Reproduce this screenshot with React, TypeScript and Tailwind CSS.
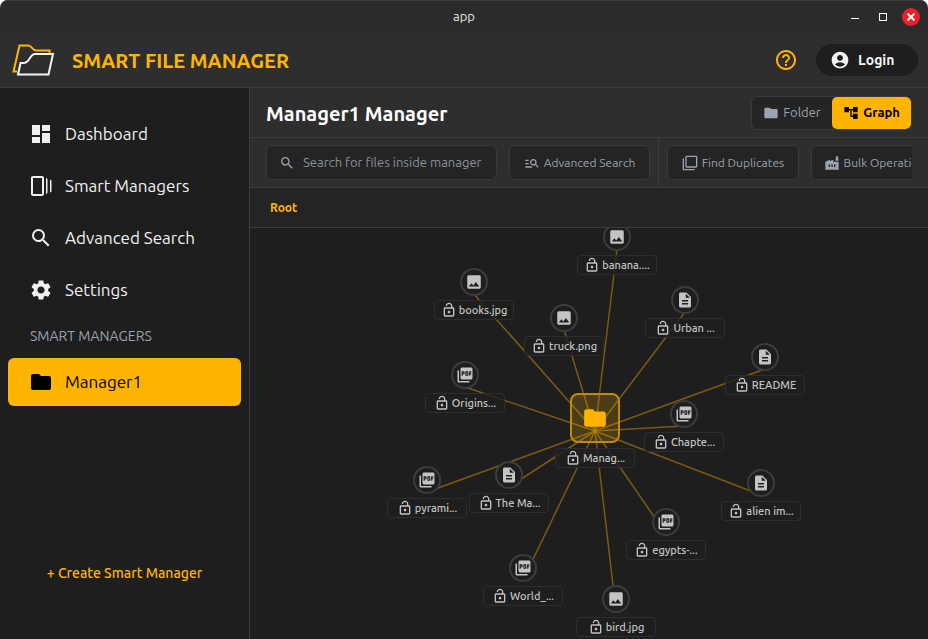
import type { ComponentType, ReactNode } from "react";
import {
  MdAccountCircle,
  MdAccountTree,
  MdDashboard,
  MdDescription,
  MdFactory,
  MdFilterNone,
  MdFolder,
  MdHelpOutline,
  MdImage,
  MdLockOpen,
  MdManageSearch,
  MdPictureAsPdf,
  MdSearch,
  MdSettings,
} from "react-icons/md";

type Icon = ComponentType<{ className?: string }>;

function StoriesIcon({ className }: { className?: string }) {
  return (
    <svg viewBox="0 0 24 24" className={className} fill="currentColor" aria-hidden="true">
      <path d="M17 4c1.1.2 1.5 1 1.500 2v12c0 1-.4 1.800-1.500 2V4zM2 4v16c0 1.100.9 2 2 2h9c1.100 0 2-.9 2-2V4c0-1.100-.9-2-2-2H4c-1.100 0-2 .9-2 2zm2 0h9v16H4V4zm17 14.500c.830-.170 1.500-.8 1.500-1.500V7c0-.7-.670-1.330-1.500-1.500v13z" />
    </svg>
  );
}

function Logo() {
  return (
    <svg viewBox="0 0 44 34" className="h-[34px] w-11" fill="none" strokeWidth="2" aria-hidden="true">
      <path d="M5 28.500H1.500L7.500 2.500H16c4 0 4.500 5 8 5h13.500v3.500" stroke="#ffb400" />
      <path d="M23 11h18L36.500 31.500H6L8.500 20h3c6.500 0 6-9 11.500-9z" stroke="#f5f5f5" />
    </svg>
  );
}

const nav: { label: string; icon: Icon }[] = [
  { label: "Dashboard", icon: MdDashboard },
  { label: "Smart Managers", icon: StoriesIcon },
  { label: "Advanced Search", icon: MdSearch },
  { label: "Settings", icon: MdSettings },
];

const kinds = { image: MdImage, text: MdDescription, pdf: MdPictureAsPdf };

type GraphNode = { name: string; kind: keyof typeof kinds; x: number; y: number };

// Node centres on the free graph canvas.
const nodes: GraphNode[] = [
  { name: "banana....", kind: "image", x: 367, y: 9 },
  { name: "books.jpg", kind: "image", x: 224, y: 54 },
  { name: "truck.png", kind: "image", x: 314, y: 90 },
  { name: "Urban ...", kind: "text", x: 435, y: 72 },
  { name: "README", kind: "text", x: 515, y: 129 },
  { name: "Origins...", kind: "pdf", x: 215, y: 147 },
  { name: "Chapte...", kind: "pdf", x: 434, y: 186 },
  { name: "pyrami...", kind: "pdf", x: 177, y: 252 },
  { name: "The Ma...", kind: "text", x: 259, y: 247 },
  { name: "alien im...", kind: "text", x: 511, y: 255 },
  { name: "egypts-...", kind: "pdf", x: 416, y: 294 },
  { name: "World_...", kind: "pdf", x: 273, y: 340 },
  { name: "bird.jpg", kind: "image", x: 366, y: 371 },
];

const root = { x: 345, y: 203 };

function NodeLabel({ children }: { children: ReactNode }) {
  return (
    <span className="flex h-5 w-20 items-center justify-center gap-0.5 rounded border border-[#2e2e2e] bg-[#1e1e1e]/80 text-[11px] leading-4 font-medium whitespace-nowrap text-[#c4c4c4]">
      <MdLockOpen className="size-4 shrink-0" />
      {children}
    </span>
  );
}

function ToolButton({ icon: I, label, width }: { icon: Icon; label: string; width: string }) {
  return (
    <button
      type="button"
      className={`flex h-[35px] shrink-0 items-center justify-center gap-1 rounded-md border border-[#3a3a3a] bg-[#242424] text-xs whitespace-nowrap text-[#9ca3af] ${width}`}
    >
      <I className="size-4" />
      {label}
    </button>
  );
}

function TitleBar() {
  return (
    <div className="grid h-8 shrink-0 grid-cols-[1fr_auto_1fr] items-center border-t border-[#3d3d3d] bg-[#2b2b2b]">
      <span />
      <span className="text-[13px] text-[#e6e6e6]">app</span>
      <div className="flex items-center justify-end gap-[10px] pr-2">
        <button type="button" aria-label="Minimize" className="flex size-[18px] items-center justify-center">
          <span className="mt-1 h-px w-2 bg-white" />
        </button>
        <button type="button" aria-label="Maximize" className="flex size-[18px] items-center justify-center">
          <span className="size-2 border border-white" />
        </button>
        <button
          type="button"
          aria-label="Close"
          className="flex size-[18px] items-center justify-center rounded-full bg-[#e9202a]"
        >
          <svg viewBox="0 0 8 8" className="size-2" stroke="white" strokeWidth="2" aria-hidden="true">
            <path d="M0.500 0.500l7 7M7.500 0.500l-7 7" />
          </svg>
        </button>
      </div>
    </div>
  );
}

function Header() {
  return (
    <header className="flex h-14 shrink-0 items-center border-b border-[#3d3d3d] bg-[#2e2e2e] pr-[10px] pl-3">
      <Logo />
      <h1 className="ml-4 pt-0.5 text-xl font-bold text-[#ffb400]">SMART FILE MANAGER</h1>
      <button type="button" aria-label="Help" className="ml-auto text-[#ffb400]">
        <MdHelpOutline className="size-6" />
      </button>
      <button
        type="button"
        className="ml-[18px] flex h-8 w-[102px] items-center gap-2 rounded-full bg-[#1e1e1e] pl-[14px] text-sm font-semibold text-[#f5f5f5]"
      >
        <MdAccountCircle className="size-5" />
        Login
      </button>
    </header>
  );
}

function Sidebar() {
  return (
    <aside className="flex w-[250px] shrink-0 flex-col border-r border-[#3d3d3d] bg-[#1e1e1e] px-2 pt-[22px]">
      <nav className="flex flex-col gap-1">
        {nav.map(({ label, icon: I }) => (
          <a key={label} href="#" className="flex h-12 items-center gap-3 px-[21px] text-[17px] text-[#f0f0f0]">
            <I className="size-6" />
            {label}
          </a>
        ))}
        <h2 className="flex h-9 items-center px-[22px] text-sm text-[#9ca3af]">SMART MANAGERS</h2>
        <a href="#" className="flex h-12 items-center gap-3 rounded-md bg-[#ffb400] px-[21px] text-[17px] text-black">
          <MdFolder className="size-6" />
          Manager1
        </a>
      </nav>
      <button type="button" className="mt-auto mb-14 self-center text-sm font-medium text-[#ffb400]">
        + Create Smart Manager
      </button>
    </aside>
  );
}

function Graph() {
  return (
    <div className="relative min-h-0 flex-1 overflow-hidden bg-[#1e1e1e]">
      <svg className="absolute inset-0 h-full w-full" aria-hidden="true">
        {nodes.map((n) => (
          <line
            key={n.name}
            x1={root.x}
            y1={root.y}
            x2={n.x}
            y2={n.y + 12}
            stroke="#7a5a12"
            strokeWidth="1.5"
          />
        ))}
      </svg>

      <div className="absolute top-[165px] left-[305px] flex w-20 flex-col items-center gap-[5px]">
        <span className="flex size-[50px] items-center justify-center rounded-lg border-2 border-[#c08a06] bg-[#ffb400]/20 text-[#ffb400]">
          <MdFolder className="size-[26px]" />
        </span>
        <NodeLabel>Manag...</NodeLabel>
      </div>
      <svg className="absolute inset-0 h-full w-full" aria-hidden="true">
        <circle cx={root.x} cy={root.y} r="2" fill="#b98408" />
      </svg>

      {nodes.map((n) => {
        const I = kinds[n.kind];
        return (
          <div
            key={n.name}
            className="absolute flex w-20 -translate-x-1/2 flex-col items-center gap-1"
            style={{ left: n.x, top: n.y - 14 }}
          >
            <span className="flex size-7 items-center justify-center rounded-full border-2 border-[#3c3c3c] bg-[#1e1e1e] text-[#c4c4c4]">
              <I className="size-[18px] shrink-0" />
            </span>
            <NodeLabel>{n.name}</NodeLabel>
          </div>
        );
      })}
    </div>
  );
}

export default function App() {
  return (
    <div className="h-screen bg-white font-['Ubuntu','Noto_Sans',sans-serif]">
      <div className="flex h-full flex-col overflow-hidden rounded-t-lg">
        <TitleBar />
        <Header />
        <div className="flex min-h-0 flex-1">
          <Sidebar />
          <main className="flex min-w-0 flex-1 flex-col">
            <div className="flex h-[50px] shrink-0 items-center justify-between border-b border-[#3d3d3d] bg-[#2e2e2e] px-4">
              <h2 className="pt-0.5 text-xl font-bold text-white">Manager1 Manager</h2>
              <div className="flex h-[34px] overflow-hidden rounded-md border border-[#3a3a3a] bg-[#242424] text-[13px]">
                <button type="button" className="flex w-20 items-center justify-center gap-1 text-[#9ca3af]">
                  <MdFolder className="size-4" />
                  Folder
                </button>
                <button
                  type="button"
                  className="flex w-[79px] items-center justify-center gap-1 rounded-[5px] bg-[#ffb400] font-semibold text-black"
                >
                  <MdAccountTree className="size-4" />
                  Graph
                </button>
              </div>
            </div>

            <div className="h-[50px] shrink-0 border-b border-[#3d3d3d] bg-[#2e2e2e] px-4">
              <div className="flex h-full items-center overflow-hidden">
                <label className="mr-3 flex h-[35px] w-[231px] shrink-0 items-center gap-2 rounded-md border border-[#3a3a3a] bg-[#242424] pl-3 text-[#9ca3af]">
                  <MdSearch className="size-4 shrink-0" />
                  <input
                    type="text"
                    aria-label="Search for files"
                    placeholder="Search for files inside manager"
                    className="w-full min-w-0 bg-transparent text-[13px] outline-none placeholder:text-[#8b919c]"
                  />
                </label>
                <ToolButton icon={MdManageSearch} label="Advanced Search" width="w-[141px]" />
                <span className="mx-2 h-full w-px shrink-0 bg-[#3d3d3d]" />
                <ToolButton icon={MdFilterNone} label="Find Duplicates" width="w-[132px]" />
                <span className="w-3 shrink-0" />
                <ToolButton icon={MdFactory} label="Bulk Operations" width="w-[132px]" />
              </div>
            </div>

            <div className="flex h-10 shrink-0 items-center border-b border-[#3d3d3d] bg-[#242424] px-5">
              <a href="#" className="text-xs font-bold text-[#ffb400]">
                Root
              </a>
            </div>
            <Graph />
          </main>
        </div>
      </div>
    </div>
  );
}
